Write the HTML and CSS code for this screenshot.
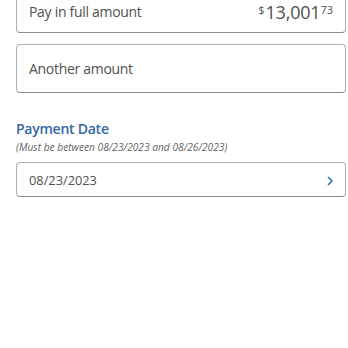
FILE: index.html
```html
<!DOCTYPE html>
<html lang="en">
<head>
    <meta charset="UTF-8">
    <meta name="viewport" content="width=device-width, initial-scale=1.0">
    <title>Payment</title>
    <link rel="stylesheet" href="styles.css">
</head>
<body>
    <div id="payment">
        <div class="option option-full">
            <span class="option-label">Pay in full amount</span>
            <span class="amount"><sup>$</sup>13,001<sup>73</sup></span>
        </div>

        <div class="option">
            <span class="option-label">Another amount</span>
        </div>

        <div id="date-section">
            <div class="section-title">Payment Date</div>
            <div class="section-note">(Must be between 08/23/2023 and 08/26/2023)</div>

            <div class="date-picker">
                <span class="date-value">08/23/2023</span>
                <svg class="chevron" width="8" height="12" viewBox="0 0 8 12">
                    <path d="M2 2 L6 6 L2 10" fill="none" stroke="#3b6fb0" stroke-width="1.5"/>
                </svg>
            </div>
        </div>
    </div>
</body>
</html>
```

FILE: styles.css
```css
body, html {
    padding: 0;
    margin: 0;
    background-color: white;
}

#payment {
    font-family: "Open Sans", sans-serif;
    color: rgb(80, 80, 80);
    padding-left: 16px;
    padding-right: 2px;
    margin-top: -11px;
}

.option {
    display: flex;
    align-items: center;
    justify-content: space-between;
    box-sizing: border-box;
    height: 49px;
    padding-left: 12px;
    padding-right: 12px;
    border: 1px solid rgb(175, 175, 175);
    border-bottom-color: rgb(140, 140, 140);
    border-radius: 4px;
    margin-bottom: 11px;
}

.option-full {
    height: 44px;
}

.option-label {
    font-size: 14px;
    letter-spacing: -0.3px;
}

.amount {
    font-size: 18px;
    line-height: 24px;
    letter-spacing: -0.2px;
    position: relative;
    top: 1px;
}

.amount sup {
    font-size: 11px;
    line-height: 1;
    letter-spacing: 0;
    vertical-align: text-top;
    position: relative;
    top: 3.8px;
}

.amount sup:first-child {
    margin-right: 1px;
}

#date-section {
    padding-top: 15px;
}

.section-title {
    font-size: 14px;
    font-weight: 600;
    letter-spacing: -0.25px;
    color: rgb(52, 104, 165);
    line-height: 20px;
}

.section-note {
    font-size: 10.2px;
    font-style: italic;
    color: rgb(100, 100, 100);
    line-height: 14px;
    margin-top: 1px;
    margin-bottom: 8px;
}

.date-picker {
    display: flex;
    align-items: center;
    justify-content: space-between;
    box-sizing: border-box;
    height: 35px;
    padding-left: 12px;
    padding-right: 11px;
    border: 1px solid rgb(175, 175, 175);
    border-bottom-color: rgb(140, 140, 140);
    border-radius: 4px;
}

.date-value {
    font-size: 12.8px;
}

.chevron {
    position: relative;
    top: 1px;
}
```
